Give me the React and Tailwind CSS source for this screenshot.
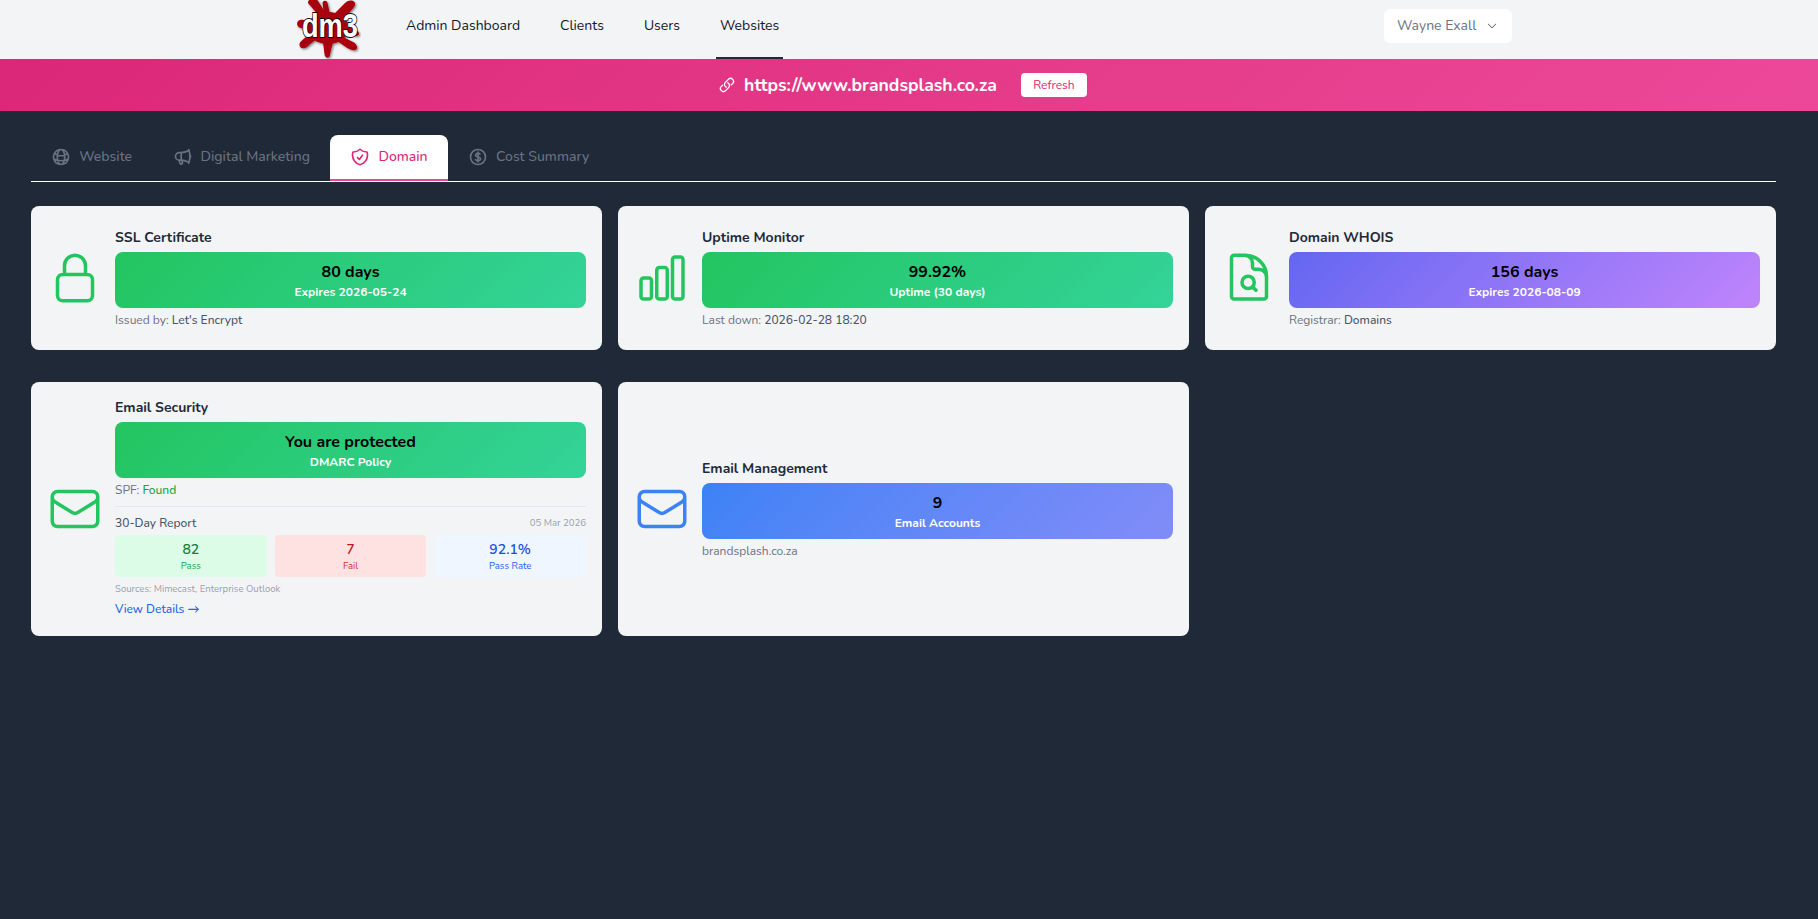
import React from 'react';
import {
  HiOutlineLink,
  HiOutlineGlobeAlt,
  HiOutlineMegaphone,
  HiOutlineShieldCheck,
  HiOutlineCurrencyDollar,
  HiOutlineLockClosed,
  HiOutlineChartBar,
  HiOutlineDocumentMagnifyingGlass,
  HiOutlineEnvelope,
  HiChevronDown,
} from 'react-icons/hi2';

const Logo = () => (
  <svg width="64" height="59" viewBox="12 0 64 59" className="shrink-0">
    <defs>
      <filter id="logoShadow" x="-20%" y="-20%" width="140%" height="140%">
        <feDropShadow dx="1.2" dy="1.2" stdDeviation="1" floodColor="#000" floodOpacity="0.5" />
      </filter>
    </defs>
    <g filter="url(#logoShadow)" fill="#a8000f">
      <ellipse cx="43" cy="28" rx="21" ry="16" />
      {/* splat arms */}
      <path d="M34 16 L23 3 C23 -2 31 -3 33 1 L42 15 Z" />
      <path d="M39 14 L37.5 3 C38 0 42 0 42.5 3 L45 14 Z" />
      <path d="M48 15 L60 3 C64 -1 71 0 70 5 C69 9 62 13 58 23 Z" />
      <path d="M60 24 L71 30 C75 32 75 36 71 36 L60 34 Z" />
      <path d="M56 36 L66 41 C72 43 74 49 70 50 C66 51 62 48 51 40 Z" />
      <path d="M38 42 L39.5 54 C40 59 45 59 45 54 L48 42 Z" />
      <path d="M33 38 L24 45 C20 50 14 49 14.5 44 C15 41 20 38 27 32 Z" />
      <path d="M28 30 L16 28 C11 27 11 21 15 20 C18 19 24 22 30 24 Z" />
    </g>
    <text
      transform="translate(17 37) scale(0.8 1)"
      fontFamily="Liberation Sans, sans-serif"
      fontWeight="700"
      fontSize="34"
      fill="#ffffff"
      stroke="#0a0a0a"
      strokeWidth="1.8"
      paintOrder="stroke"
    >
      dm3
    </text>
  </svg>
);

const tabs = [
  { name: 'Website', icon: HiOutlineGlobeAlt },
  { name: 'Digital Marketing', icon: HiOutlineMegaphone },
  { name: 'Domain', icon: HiOutlineShieldCheck, active: true },
  { name: 'Cost Summary', icon: HiOutlineCurrencyDollar },
];

const StatusBar = ({ gradient, big, small }) => (
  <div className={`h-14 rounded-lg flex flex-col items-center justify-center ${gradient}`}>
    <div className="text-base leading-[22px] font-bold text-black">{big}</div>
    <div className="mt-[2px] text-xs leading-[14px] font-bold text-white">{small}</div>
  </div>
);

const Card = ({ icon: Icon, iconColor = 'text-[#22c55e]', children }) => (
  <div className="min-h-[144px] rounded-lg bg-[#f3f4f6] p-4 flex items-center gap-3">
    <Icon className={`w-14 h-14 shrink-0 ${iconColor}`} />
    <div className="flex-1 min-w-0">{children}</div>
  </div>
);

const CardTitle = ({ children }) => (
  <div className="text-sm leading-5 font-bold text-gray-800 mb-1">{children}</div>
);

const Footnote = ({ label, value }) => (
  <div className="mt-1 text-xs leading-4 text-gray-500">
    {label} <span className="font-medium text-gray-600">{value}</span>
  </div>
);

const green = 'bg-linear-135 from-[#22c55e] to-[#34d399]';

export default function App() {
  return (
    <div className="min-h-screen bg-[#1f2937] font-['Nunito','Lato',sans-serif]">
      <nav className="h-[59px] bg-[#f3f4f6] pl-[297px] pr-[306px] flex items-center justify-between">
        <div className="flex items-center h-full">
          <Logo />
          <div className="ml-[41px] flex gap-8 h-full">
            <a className="px-1 pb-[5px] flex items-center text-sm text-gray-900 border-b-2 border-transparent">Admin Dashboard</a>
            <a className="px-1 pb-[5px] flex items-center text-sm text-gray-900 border-b-2 border-transparent">Clients</a>
            <a className="px-1 pb-[5px] flex items-center text-sm text-gray-900 border-b-2 border-transparent">Users</a>
            <a className="px-1 pb-[5px] flex items-center text-sm text-gray-900 border-b-2 border-[#1f2937]">Websites</a>
          </div>
        </div>
        <button className="w-32 h-[34px] mb-[8px] bg-white rounded-md flex items-center justify-between pl-[13px] pr-[14px] text-sm text-gray-500">
          Wayne Exall
          <HiChevronDown className="w-3 h-3" />
        </button>
      </nav>

      <div className="h-[52px] bg-linear-135 from-[#db2777] to-[#ec4899] flex items-center justify-center pr-[12px]">
        <HiOutlineLink strokeWidth={2} className="w-4 h-4 text-white" />
        <span className="ml-[9px] text-[17.6px] font-bold text-white">https://www.brandsplash.co.za</span>
        <button className="ml-6 w-[66px] h-6 bg-white rounded text-xs text-[#db2777]">Refresh</button>
      </div>

      <div className="pl-[31px] pr-[42px] pt-6">
        <div className="flex border-b border-white">
          {tabs.map((tab) => (
            <div
              key={tab.name}
              className={
                tab.active
                  ? 'h-[46px] px-[20.25px] flex items-center gap-2 bg-white rounded-t-lg border-b-2 border-[#ec4899] text-[#db2777] text-sm font-medium'
                  : 'h-[46px] px-[20.25px] flex items-center gap-2 border-b-2 border-transparent text-gray-500 text-sm font-medium'
              }
            >
              <tab.icon strokeWidth={2} className="w-5 h-5" />
              {tab.name}
            </div>
          ))}
        </div>

        <div className="mt-6 grid grid-cols-3 gap-x-4 gap-y-8">
          <Card icon={HiOutlineLockClosed}>
            <CardTitle>SSL Certificate</CardTitle>
            <StatusBar gradient={green} big="80 days" small="Expires 2026-05-24" />
            <Footnote label="Issued by:" value="Let's Encrypt" />
          </Card>

          <Card icon={HiOutlineChartBar}>
            <CardTitle>Uptime Monitor</CardTitle>
            <StatusBar gradient={green} big="99.92%" small="Uptime (30 days)" />
            <Footnote label="Last down:" value="2026-02-28 18:20" />
          </Card>

          <Card icon={HiOutlineDocumentMagnifyingGlass}>
            <CardTitle>Domain WHOIS</CardTitle>
            <StatusBar gradient="bg-linear-135 from-[#6366f1] to-[#c084fc]" big="156 days" small="Expires 2026-08-09" />
            <Footnote label="Registrar:" value="Domains" />
          </Card>

          <Card icon={HiOutlineEnvelope}>
            <CardTitle>Email Security</CardTitle>
            <StatusBar gradient={green} big="You are protected" small="DMARC Policy" />
            <div className="mt-1 text-xs leading-4 text-gray-500">
              SPF: <span className="font-medium text-[#16a34a]">Found</span>
            </div>
            <div className="mt-2 pt-2 border-t border-gray-200">
              <div className="flex items-center justify-between">
                <span className="text-xs leading-4 font-medium text-gray-600">30-Day Report</span>
                <span className="text-[9.6px] leading-4 text-gray-400">05 Mar 2026</span>
              </div>
              <div className="mt-1 grid grid-cols-3 gap-2">
                <div className="h-[42px] rounded bg-[#dcfce7] flex flex-col items-center justify-center">
                  <span className="text-sm leading-5 font-semibold text-[#15803d]">82</span>
                  <span className="text-[9.6px] leading-3 text-[#16a34a]">Pass</span>
                </div>
                <div className="h-[42px] rounded bg-[#fee2e2] flex flex-col items-center justify-center">
                  <span className="text-sm leading-5 font-semibold text-[#b91c1c]">7</span>
                  <span className="text-[9.6px] leading-3 text-[#dc2626]">Fail</span>
                </div>
                <div className="h-[42px] rounded bg-[#eff6ff] flex flex-col items-center justify-center">
                  <span className="text-sm leading-5 font-semibold text-[#1d4ed8]">92.1%</span>
                  <span className="text-[9.6px] leading-3 text-[#2563eb]">Pass Rate</span>
                </div>
              </div>
              <div className="mt-1 text-[9.6px] leading-[15px] text-gray-400">Sources: Mimecast, Enterprise Outlook</div>
              <a className="mt-[2px] block text-xs leading-[22px] font-medium text-[#2563eb]">View Details →</a>
            </div>
          </Card>

          <Card icon={HiOutlineEnvelope} iconColor="text-[#3b82f6]">
            <CardTitle>Email Management</CardTitle>
            <StatusBar gradient="bg-linear-135 from-[#3b82f6] to-[#818cf8]" big="9" small="Email Accounts" />
            <div className="mt-1 text-xs leading-4 text-gray-500">brandsplash.co.za</div>
          </Card>
        </div>
      </div>
    </div>
  );
}
